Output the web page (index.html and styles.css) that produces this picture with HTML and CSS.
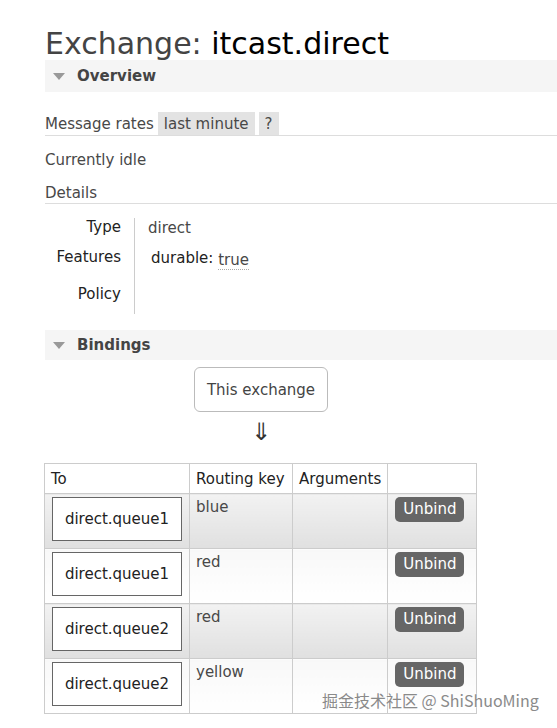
FILE: index.html
```html
<!DOCTYPE html>
<html>
<head>
<meta charset="utf-8">
<link rel="stylesheet" href="styles.css">
</head>
<body>
<main class="page">
  <h1 class="title"><span class="title-label">Exchange:</span> itcast.direct</h1>

  <section class="section">
    <div class="section-head"><span class="tri"></span>Overview</div>
    <div class="section-body">
      <div class="rates">
        <span class="rates-label">Message rates</span>
        <span class="badge">last minute</span>
        <span class="badge">?</span>
      </div>
      <p class="idle">Currently idle</p>
      <h3 class="details">Details</h3>
      <div class="facts">
        <div class="fact-labels">
          <div class="fl fl-type">Type</div>
          <div class="fl fl-feat">Features</div>
          <div class="fl fl-pol">Policy</div>
        </div>
        <div class="fact-values">
          <div class="fv fv-type">direct</div>
          <div class="fv fv-feat"><span class="key">durable:</span> <span class="dotted">true</span></div>
        </div>
      </div>
    </div>
  </section>

  <section class="section bindings">
    <div class="section-head"><span class="tri"></span>Bindings</div>
    <div class="diagram">
      <div class="this-ex">This exchange</div>
      <div class="arrow">&#8659;</div>
    </div>
    <table class="bind-table">
      <thead>
        <tr><th class="c-to">To</th><th class="c-rk">Routing key</th><th class="c-arg">Arguments</th><th class="c-act"></th></tr>
      </thead>
      <tbody>
        <tr class="odd"><td><div class="queue">direct.queue1</div></td><td>blue</td><td></td><td><span class="btn">Unbind</span></td></tr>
        <tr class="even"><td><div class="queue">direct.queue1</div></td><td>red</td><td></td><td><span class="btn">Unbind</span></td></tr>
        <tr class="odd"><td><div class="queue">direct.queue2</div></td><td>red</td><td></td><td><span class="btn">Unbind</span></td></tr>
        <tr class="even"><td><div class="queue">direct.queue2</div></td><td>yellow</td><td></td><td><span class="btn">Unbind</span></td></tr>
      </tbody>
    </table>
  </section>
  <div class="watermark">掘金技术社区 @ ShiShuoMing</div>
</main>
</body>
</html>
```

FILE: styles.css
```css
html, body {
  margin: 0;
  padding: 0;
  background: #fff;
}
body {
  font-family: "DejaVu Sans", Verdana, sans-serif;
  font-size: 15px;
  color: #484848;
  overflow: hidden;
}
.page {
  position: relative;
  padding: 27px 0 0 45px;
  height: 701px;
}
.title {
  margin: 0;
  font-size: 30px;
  font-weight: normal;
  line-height: 33px;
  color: #000;
}
.title-label {
  color: #444;
}
.section-head {
  display: flex;
  align-items: center;
  height: 32px;
  background: #f5f5f5;
  font-weight: bold;
  font-size: 15px;
  color: #444;
}
.tri {
  width: 0;
  height: 0;
  border-left: 6px solid transparent;
  border-right: 6px solid transparent;
  border-top: 7px solid #999;
  margin: 1px 12px 0 8px;
}
.section-body {
  padding-top: 19px;
}
.rates {
  display: flex;
  align-items: flex-end;
  gap: 4px;
  border-bottom: 1px solid #ddd;
  height: 24px;
}
.rates-label {
  line-height: 22px;
}
.badge {
  display: inline-block;
  background: #e3e3e3;
  padding: 0 6px;
  line-height: 24px;
  height: 23px;
}
.idle {
  margin: 14px 0 0;
  line-height: 20px;
}
.details {
  margin: 13px 0 0;
  font-weight: normal;
  font-size: 15px;
  line-height: 20px;
  padding-bottom: 0;
  border-bottom: 1px solid #ddd;
}
.facts {
  display: flex;
  margin-top: 14px;
}
.fact-labels {
  width: 76px;
  text-align: right;
  padding-right: 13px;
  border-right: 1px solid #ccc;
  height: 96px;
  color: #222;
}
.fl {
  line-height: 20px;
}
.fl-type { margin-top: -1px; }
.fl-feat { margin-top: 10px; }
.fl-pol { margin-top: 17px; }
.fact-values {
  padding-left: 13px;
}
.fv {
  line-height: 20px;
}
.fv-feat {
  margin-top: 10px;
  padding-left: 3px;
}
.key {
  color: #222;
}
.dotted {
  border-bottom: 1px dotted #aaa;
  position: relative;
  top: 2px;
}
.bindings {
  margin-top: 16px;
}
.bindings .section-head {
  height: 30px;
}
.diagram {
  width: 432px;
  display: flex;
  flex-direction: column;
  align-items: center;
  padding-top: 7px;
}
.this-ex {
  width: 132px;
  height: 43px;
  border: 1px solid #bbb;
  border-radius: 6px;
  display: flex;
  align-items: center;
  justify-content: center;
  color: #444;
}
.arrow {
  font-size: 24px;
  line-height: 28px;
  margin-top: 6px;
  color: #333;
}
.bind-table {
  margin-top: 17px;
  margin-left: -1px;
  border-collapse: collapse;
  font-size: 15px;
}
.bind-table th, .bind-table td {
  border: 1px solid #ccc;
  text-align: left;
  vertical-align: top;
  padding: 0;
}
.bind-table th {
  font-weight: normal;
  color: #222;
  height: 28px;
  line-height: 28px;
  padding: 1px 6px 0;
  background: #fff;
}
.c-to { width: 132px; }
.c-rk { width: 90px; }
.c-arg { width: 82px; }
.c-act { width: 76px; }
.bind-table td {
  height: 51px;
  padding: 3px 6px 0;
  line-height: 20px;
}
.bind-table td:first-child {
  padding: 3px 6px 0 7px;
}
.odd td {
  background: linear-gradient(#f2f2f2, #e0e0e0);
}
.even td {
  background: linear-gradient(#f8f8f8, #ffffff);
}
.queue {
  width: 128px;
  height: 42px;
  border: 1px solid #666;
  background: #fff;
  display: flex;
  align-items: center;
  justify-content: center;
  color: #222;
}
.bind-table td:last-child {
  padding: 3px 6px 0 7px;
}
.btn {
  display: inline-block;
  background: #666;
  color: #fff;
  border-radius: 5px;
  padding: 0 8px;
  height: 25px;
  line-height: 25px;
  font-size: 15px;
}
.watermark {
  position: absolute;
  left: 322px;
  top: 688px;
  font-family: "Noto Sans CJK SC", "DejaVu Sans", sans-serif;
  font-size: 16px;
  color: #8a8a8a;
  text-shadow: 0 0 2px #fff, 0 0 2px #fff;
  white-space: nowrap;
}
```
